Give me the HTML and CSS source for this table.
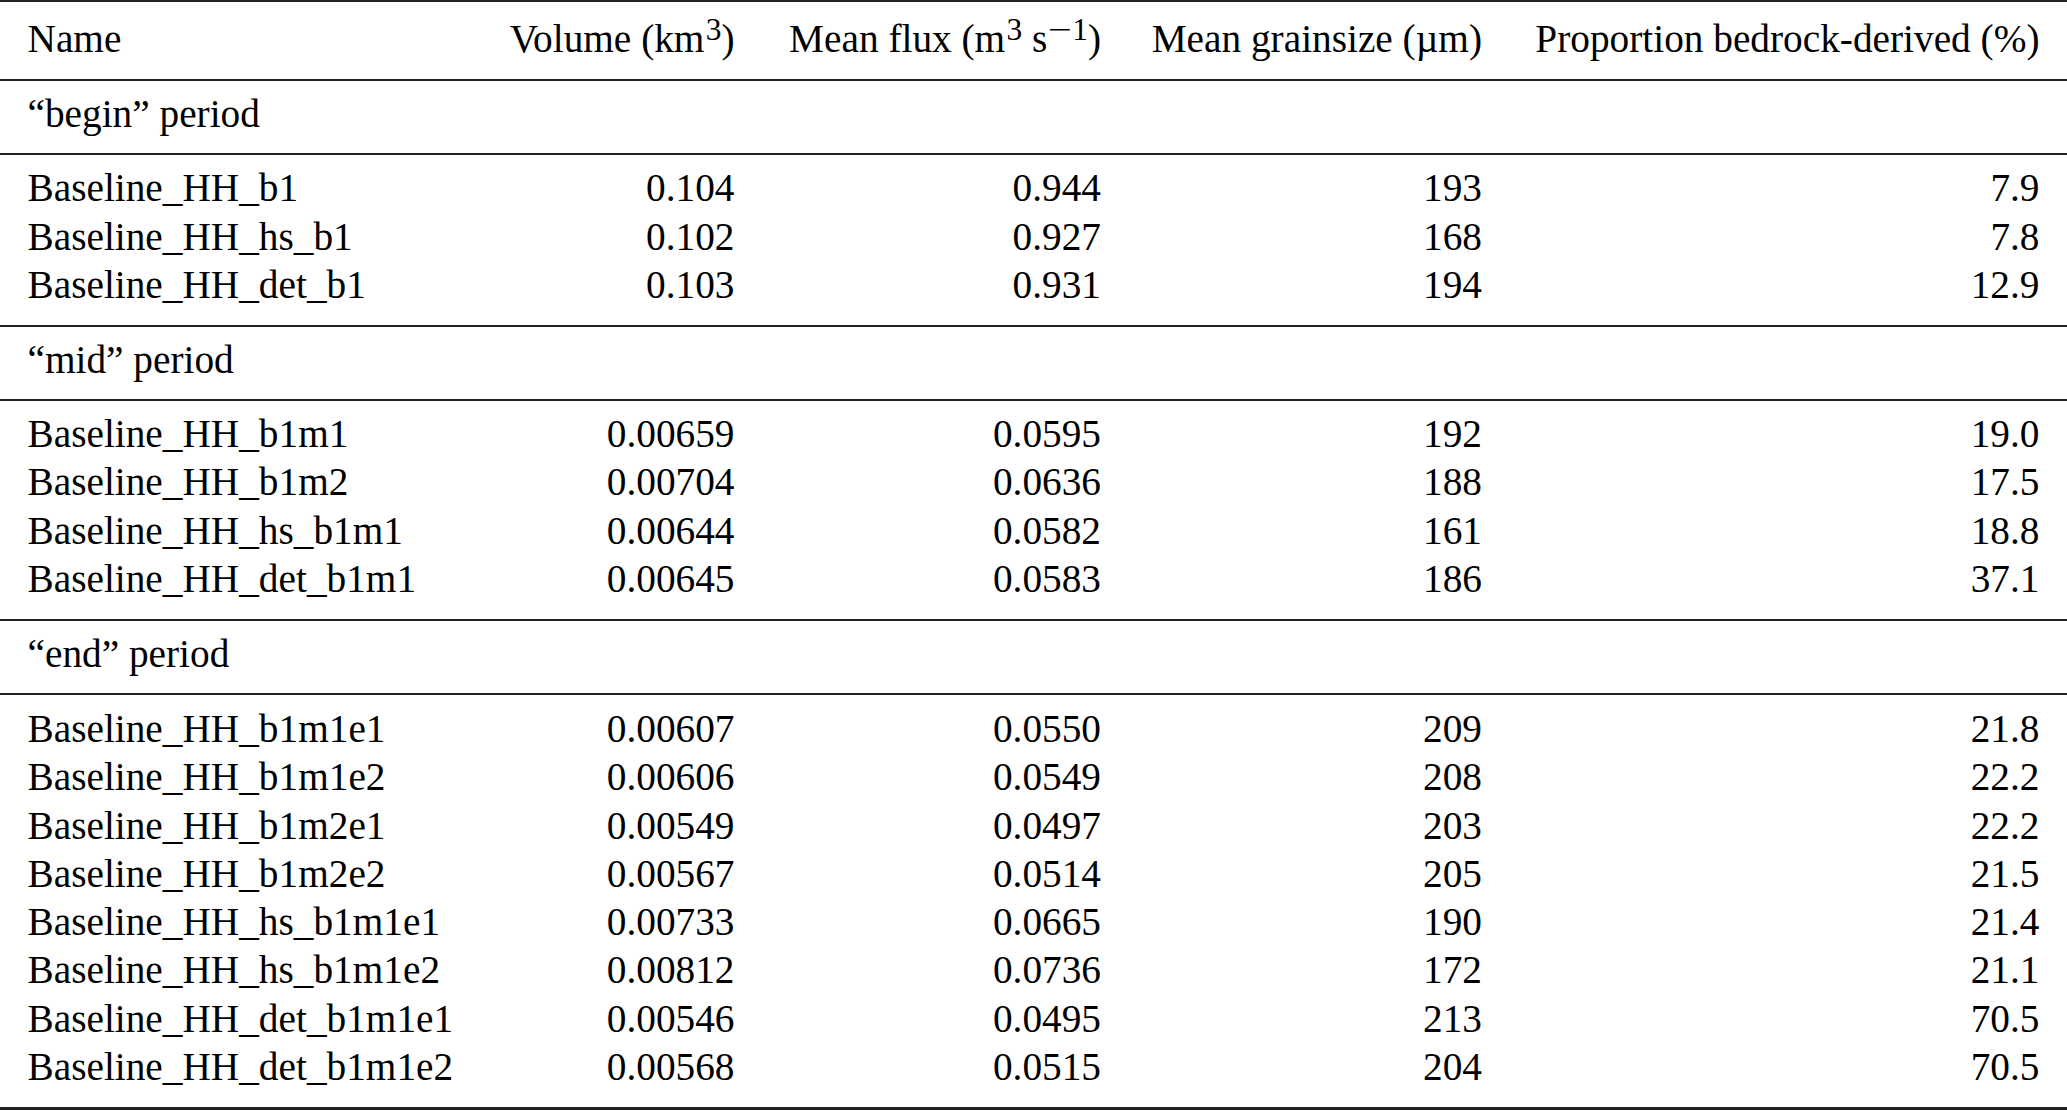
FILE: index.html
```html
<!DOCTYPE html>
<html lang="en">
<head>
<meta charset="utf-8">
<title>Sediment volumes by period</title>
<link rel="stylesheet" href="styles.css">
</head>
<body>
<table class="results">
  <colgroup>
    <col class="c-name">
    <col class="c-vol">
    <col class="c-flux">
    <col class="c-grain">
    <col class="c-prop">
  </colgroup>
  <thead>
    <tr>
      <th class="name">Name</th>
      <th>Volume (km<sup>3</sup>)</th>
      <th>Mean flux (m<sup>3</sup> s<sup><span class="minus">&minus;</span>1</sup>)</th>
      <th>Mean grainsize (&micro;m)</th>
      <th>Proportion bedrock-derived (%)</th>
    </tr>
  </thead>
  <tbody>
    <tr class="group"><td colspan="5">“begin” period</td></tr>
    <tr><td class="name">Baseline_HH_b1</td><td>0.104</td><td>0.944</td><td>193</td><td>7.9</td></tr>
    <tr><td class="name">Baseline_HH_hs_b1</td><td>0.102</td><td>0.927</td><td>168</td><td>7.8</td></tr>
    <tr><td class="name">Baseline_HH_det_b1</td><td>0.103</td><td>0.931</td><td>194</td><td>12.9</td></tr>
  </tbody>
  <tbody>
    <tr class="group"><td colspan="5">“mid” period</td></tr>
    <tr><td class="name">Baseline_HH_b1m1</td><td>0.00659</td><td>0.0595</td><td>192</td><td>19.0</td></tr>
    <tr><td class="name">Baseline_HH_b1m2</td><td>0.00704</td><td>0.0636</td><td>188</td><td>17.5</td></tr>
    <tr><td class="name">Baseline_HH_hs_b1m1</td><td>0.00644</td><td>0.0582</td><td>161</td><td>18.8</td></tr>
    <tr><td class="name">Baseline_HH_det_b1m1</td><td>0.00645</td><td>0.0583</td><td>186</td><td>37.1</td></tr>
  </tbody>
  <tbody>
    <tr class="group"><td colspan="5">“end” period</td></tr>
    <tr><td class="name">Baseline_HH_b1m1e1</td><td>0.00607</td><td>0.0550</td><td>209</td><td>21.8</td></tr>
    <tr><td class="name">Baseline_HH_b1m1e2</td><td>0.00606</td><td>0.0549</td><td>208</td><td>22.2</td></tr>
    <tr><td class="name">Baseline_HH_b1m2e1</td><td>0.00549</td><td>0.0497</td><td>203</td><td>22.2</td></tr>
    <tr><td class="name">Baseline_HH_b1m2e2</td><td>0.00567</td><td>0.0514</td><td>205</td><td>21.5</td></tr>
    <tr><td class="name">Baseline_HH_hs_b1m1e1</td><td>0.00733</td><td>0.0665</td><td>190</td><td>21.4</td></tr>
    <tr><td class="name">Baseline_HH_hs_b1m1e2</td><td>0.00812</td><td>0.0736</td><td>172</td><td>21.1</td></tr>
    <tr><td class="name">Baseline_HH_det_b1m1e1</td><td>0.00546</td><td>0.0495</td><td>213</td><td>70.5</td></tr>
    <tr><td class="name">Baseline_HH_det_b1m1e2</td><td>0.00568</td><td>0.0515</td><td>204</td><td>70.5</td></tr>
  </tbody>
</table>
</body>
</html>
```

FILE: styles.css
```css
html, body {
  margin: 0;
  padding: 0;
  background: #ffffff;
}

body {
  font-family: "Liberation Serif", "Times New Roman", serif;
  font-size: 39.3px;
  color: #000000;
}

.results {
  width: 2067px;
  table-layout: fixed;
  border-collapse: separate;
  border-spacing: 0;
}

.c-name  { width: 482px; }
.c-vol   { width: 280px; }
.c-flux  { width: 366.5px; }
.c-grain { width: 381px; }
.c-prop  { width: 557.5px; }

.results th,
.results td {
  padding: 0 27.5px;
  line-height: 48.3px;
  font-weight: 400;
  white-space: nowrap;
  text-align: right;
  vertical-align: baseline;
}

.results .name {
  text-align: left;
}

.results thead th {
  padding-top: 12.6px;
  padding-bottom: 16.1px;
  padding-left: 12px;
  border-top: 2px solid #222222;
  border-bottom: 2px solid #222222;
}

.results thead th.name {
  padding-left: 27.5px;
}

.results tr.group td {
  text-align: left;
  padding-top: 9.3px;
  padding-bottom: 14.7px;
  border-bottom: 2px solid #222222;
}

.results tr.group + tr td {
  padding-top: 9px;
}

.results tbody:last-child tr.group + tr td {
  padding-top: 10px;
}

.results tbody tr:last-child td {
  padding-bottom: 15.5px;
  border-bottom: 2px solid #222222;
}

.results tbody:last-child tr:last-child td {
  padding-bottom: 16px;
  border-bottom-width: 3px;
}

.results sup {
  font-size: 0.8em;
  line-height: 0;
  vertical-align: 0.36em;
  margin-left: 0.04em;
}

.results .minus {
  display: inline-block;
  transform: scaleX(1.35);
  margin: 0 0.12em 0 0.07em;
}
```
